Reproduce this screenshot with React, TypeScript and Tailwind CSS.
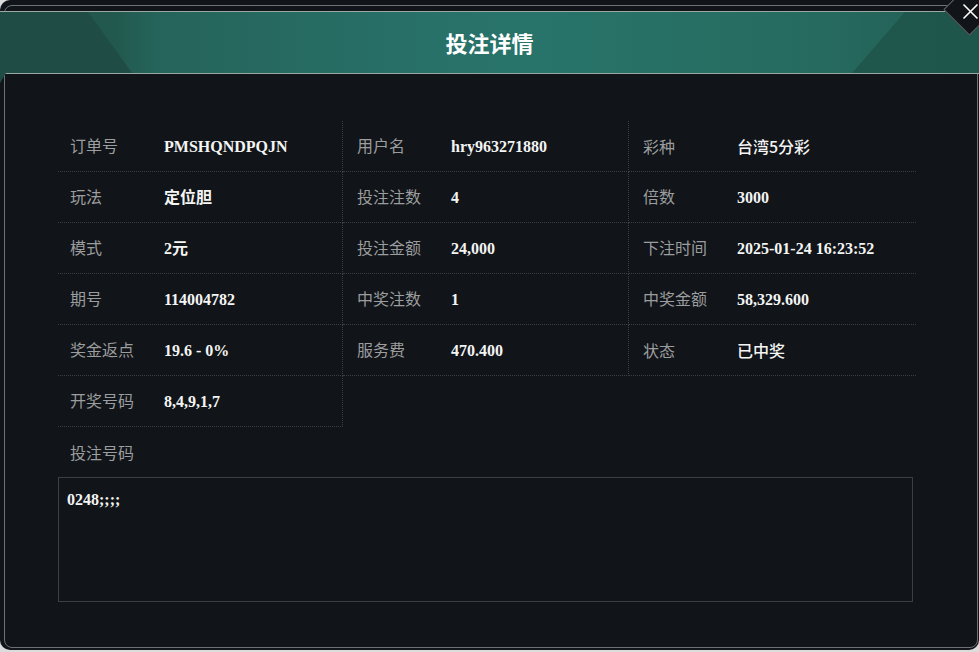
import React from "react";

type Cell = { label: string; value: string; sans?: boolean };

const rows: Cell[][] = [
  [
    { label: "订单号", value: "PMSHQNDPQJN" },
    { label: "用户名", value: "hry963271880" },
    { label: "彩种", value: "台湾5分彩", sans: true },
  ],
  [
    { label: "玩法", value: "定位胆" },
    { label: "投注注数", value: "4" },
    { label: "倍数", value: "3000" },
  ],
  [
    { label: "模式", value: "2元" },
    { label: "投注金额", value: "24,000" },
    { label: "下注时间", value: "2025-01-24 16:23:52" },
  ],
  [
    { label: "期号", value: "114004782" },
    { label: "中奖注数", value: "1" },
    { label: "中奖金额", value: "58,329.600" },
  ],
  [
    { label: "奖金返点", value: "19.6 - 0%" },
    { label: "服务费", value: "470.400" },
    { label: "状态", value: "已中奖", sans: true },
  ],
  [{ label: "开奖号码", value: "8,4,9,1,7" }],
];

const labelFont = "font-['Noto_Sans_CJK_SC',sans-serif]";
const valueFont = "font-['Liberation_Serif','Noto_Sans_CJK_SC',serif]";

function InfoCell({ cell, col }: { cell: Cell; col: number }) {
  return (
    <div
      className={
        "h-[51px] flex items-center border-b border-dotted border-[#3a3f45] " +
        (col < 2 ? "border-r " : "") +
        (col === 0 ? "pl-[12px]" : "pl-[14px]")
      }
    >
      <div className="flex items-baseline">
        <span className={"w-[94px] shrink-0 text-[16px] text-[#9b9d9f] " + labelFont}>
          {cell.label}
        </span>
        <span
          className={
            "text-[16px] text-[#f4f4f4] " +
            (cell.sans ? labelFont + " font-medium" : valueFont + " font-bold")
          }
        >
          {cell.value}
        </span>
      </div>
    </div>
  );
}

export default function App() {
  return (
    <div className="w-[979px] h-[652px] bg-[#dcdcdc] overflow-hidden">
      <div className="relative w-[979px] h-[650px] rounded-[10px] bg-[#111418] pt-[11px]">
        {/* inner frame line */}
        <div className="absolute left-[4px] top-[5px] right-[1px] bottom-[2px] rounded-[8px] border border-[#6d7276] pointer-events-none" />

        {/* header */}
        <div className="relative h-[63px] border-t border-b border-[#9aa7a3] bg-[linear-gradient(90deg,#1f4f47_0%,#22594f_12%,#25645a_16%,#287169_45%,#28746a_55%,#266a5f_84%,#235d53_100%)] flex items-center justify-center overflow-hidden">
          <div className="absolute inset-0 bg-[#1f4d45] [clip-path:polygon(0_0,88px_0,132px_100%,0_100%)]" />
          <div className="absolute inset-0 bg-[linear-gradient(90deg,#225d52,#1f564b)] [clip-path:polygon(905px_0,100%_0,100%_100%,852px_100%)]" />
          <span className={"relative text-[22px] font-bold text-white " + labelFont}>投注详情</span>
        </div>
        <div className="absolute left-0 top-[73px] w-[6px] h-[10px] bg-[#1f4d45] [clip-path:polygon(0_0,100%_0,0_100%)]" />

        {/* close diamond */}
        <div className="absolute left-[951px] top-[-9px] w-[37px] h-[37px] rotate-45 bg-[#111418] border border-[#5e6468]" />
        <svg className="absolute left-[962px] top-[3px]" width="17" height="17" viewBox="0 0 17 17">
          <path d="M1.5 1.5 L15.5 15.5 M15.5 1.5 L1.5 15.5" stroke="#ffffff" strokeWidth="1.6" />
        </svg>

        {/* content */}
        <div className="pl-[58px] pt-[47px]">
          <div className="grid grid-cols-[285px_286px_287px] w-[858px]">
            {rows.map((r, ri) =>
              r.map((c, ci) => <InfoCell key={ri + "-" + ci} cell={c} col={ci} />)
            )}
          </div>
          <div className={"h-[50px] flex items-center pl-[12px] text-[16px] text-[#9b9d9f] " + labelFont}>
            投注号码
          </div>
          <div className={"w-[855px] h-[125px] border border-[#3a3f44] pl-[8px] pt-[11px] leading-[22px] text-[16px] font-bold text-[#f4f4f4] " + valueFont}>
            0248;;;;
          </div>
        </div>
      </div>
    </div>
  );
}
